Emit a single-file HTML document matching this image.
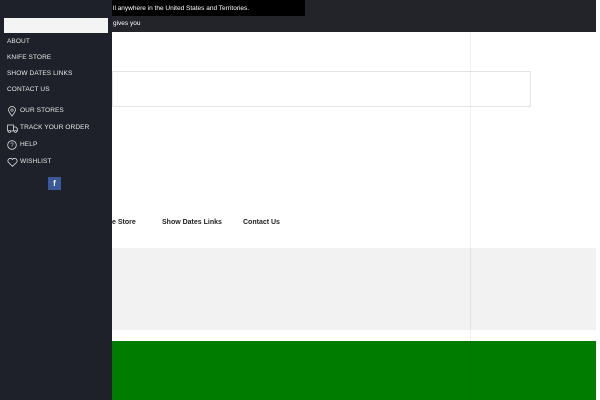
<!DOCTYPE html>
<html><head><style>
*{margin:0;padding:0;box-sizing:border-box}
body{width:600px;height:400px;overflow:hidden;background:#fff;position:relative;font-family:"Liberation Sans",sans-serif}
.abs{position:absolute}
.side a{position:absolute;left:7px;color:#e8e8e8;font-size:6.5px;letter-spacing:0.1px}
.nav{position:absolute;top:219px;font-size:7px;font-weight:bold;color:#222}
</style></head><body>
<div class="abs" style="left:0;top:0;width:596px;height:32px;background:#222429"></div>
<div class="abs" style="left:100px;top:0;width:205px;height:16px;background:#000"></div>
<div class="abs" style="left:113px;top:5px;color:#fff;font-size:6.5px">ll anywhere in the United States and Territories.</div>
<div class="abs" style="left:113px;top:20px;color:#fff;font-size:6.5px">gives you</div>
<div class="abs" style="left:112px;top:71px;width:419px;height:36px;border:1px solid #e4e4e4"></div>
<div class="nav" style="left:112px">e Store</div>
<div class="nav" style="left:162px">Show Dates Links</div>
<div class="nav" style="left:243px">Contact Us</div>
<div class="abs" style="left:112px;top:248px;width:484px;height:82px;background:#f2f2f2"></div>
<div class="abs" style="left:112px;top:341px;width:484px;height:59px;background:#007d00"></div>
<div class="abs" style="left:470px;top:32px;width:1px;height:368px;background:rgba(0,0,0,0.06)"></div>
<div class="abs side" style="left:0;top:0;width:112px;height:400px;background:#1e2129">
<div class="abs" style="left:4px;top:18px;width:104px;height:15px;background:#f4f4f4"></div>
<a style="top:38px">ABOUT</a>
<a style="top:54px">KNIFE STORE</a>
<a style="top:70px">SHOW DATES LINKS</a>
<a style="top:86px">CONTACT US</a>
<svg class="abs" style="left:7px;top:106px" width="10" height="11" viewBox="0 0 10 11"><path d="M5 10C2 6 1.5 5 1.5 4a3.5 3.5 0 0 1 7 0c0 1-.5 2-3.5 6z" fill="none" stroke="#ddd" stroke-width=".8"/><circle cx="5" cy="4" r="1.2" fill="none" stroke="#ddd" stroke-width=".7"/></svg>
<a style="left:20px;top:107px">OUR STORES</a>
<svg class="abs" style="left:7px;top:124px" width="11" height="9" viewBox="0 0 11 9"><path d="M.5 1h6v6h-6zM6.5 3h2.5l1.5 2v2h-4" fill="none" stroke="#ddd" stroke-width=".8"/><circle cx="2.5" cy="7.5" r="1" fill="#1e2129" stroke="#ddd" stroke-width=".7"/><circle cx="8.5" cy="7.5" r="1" fill="#1e2129" stroke="#ddd" stroke-width=".7"/></svg>
<a style="left:20px;top:124px">TRACK YOUR ORDER</a>
<svg class="abs" style="left:7px;top:140px" width="10" height="10" viewBox="0 0 10 10"><circle cx="5" cy="5" r="4.3" fill="none" stroke="#ddd" stroke-width=".8"/><text x="5" y="7.2" font-size="6" fill="#ddd" text-anchor="middle" font-family="Liberation Sans">?</text></svg>
<a style="left:20px;top:141px">HELP</a>
<svg class="abs" style="left:7px;top:158px" width="11" height="9" viewBox="0 0 11 9"><path d="M5.5 8.3L1.3 4.3A2.3 2.3 0 0 1 5.5 1.5a2.3 2.3 0 0 1 4.2 2.8z" fill="none" stroke="#ddd" stroke-width=".8"/></svg>
<a style="left:20px;top:158px">WISHLIST</a>
<div class="abs" style="left:48px;top:177px;width:13px;height:13px;background:#3b5998;color:#fff;font-size:8px;font-weight:bold;text-align:center;line-height:13px">f</div>
</div>
</body></html>
